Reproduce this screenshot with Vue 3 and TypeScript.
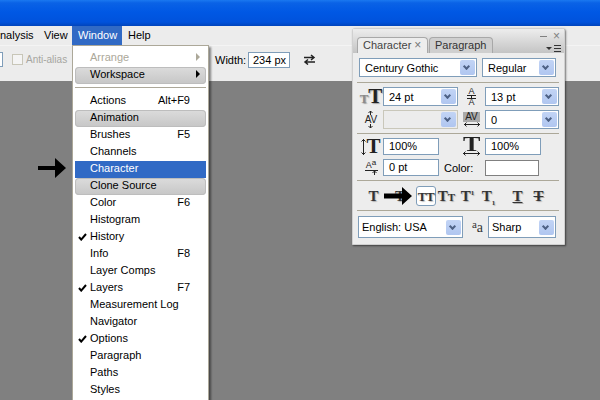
<script setup lang="ts">
interface Item { label: string; key?: string; check?: boolean; kind?: string; arrow?: boolean }
const items: Item[] = [
  { label: 'Arrange', kind: 'disabled', arrow: true },
  { label: 'Workspace', kind: 'pill', arrow: true },
  { label: '', kind: 'sep' },
  { label: 'Actions', key: 'Alt+F9' },
  { label: 'Animation', kind: 'pill' },
  { label: 'Brushes', key: 'F5' },
  { label: 'Channels' },
  { label: 'Character', kind: 'active' },
  { label: 'Clone Source', kind: 'pill' },
  { label: 'Color', key: 'F6' },
  { label: 'Histogram' },
  { label: 'History', check: true },
  { label: 'Info', key: 'F8' },
  { label: 'Layer Comps' },
  { label: 'Layers', key: 'F7', check: true },
  { label: 'Measurement Log' },
  { label: 'Navigator' },
  { label: 'Options', check: true },
  { label: 'Paragraph' },
  { label: 'Paths' },
  { label: 'Styles' },
]
</script>

<template>
  <div class="app">
    <div class="titlebar"></div>
    <div class="menubar">
      <span class="mb m-analysis">nalysis</span>
      <span class="mb m-view">View</span>
      <span class="mb m-window">Window</span>
      <span class="mb m-help">Help</span>
    </div>
    <div class="options">
      <span class="stub"></span>
      <span class="check"></span>
      <span class="aa">Anti-alias</span>
      <span class="width-label">Width:</span>
      <span class="width-input">234 px</span>
      <svg class="swap" width="13" height="11" viewBox="0 0 13 11">
        <path d="M1 3.500H10M8 1l3 2.500L8 6" fill="none" stroke="#222" stroke-width="1.500" />
        <path d="M12 8H3M5 5.500L2 8l3 2.500" fill="none" stroke="#222" stroke-width="1.500" />
      </svg>
    </div>
    <div class="canvas"></div>

    <div class="menu">
      <template v-for="it in items" :key="it.label || 'sep'">
        <div v-if="it.kind === 'sep'" class="msep"></div>
        <div v-else class="mi" :class="it.kind">
          <svg v-if="it.check" class="tick" width="9" height="8" viewBox="0 0 9 8">
            <path d="M1 4l2.200 2.600L8 1" fill="none" stroke="#000" stroke-width="2" />
          </svg>
          <span class="ml">{{ it.label }}</span>
          <span v-if="it.key" class="mk">{{ it.key }}</span>
          <span v-if="it.arrow" class="tri"></span>
        </div>
      </template>
    </div>

    <div class="marrow">
      <svg width="28" height="20" viewBox="0 0 28 20"><path d="M0 8H17V0L28 10 17 20V12H0Z" fill="#000" /></svg>
    </div>

    <div class="panel">
      <div class="head">
        <div class="tab on">Character <span class="x">×</span></div>
        <div class="tab off">Paragraph</div>
        <div class="winbtns"><span class="minus"></span><span class="close">×</span></div>
        <div class="flyout"><span class="fly-tri"></span><span class="fly-lines"></span></div>
      </div>
      <div class="body">
        <div class="r r-font">
          <div class="sel w118"><span>Century Gothic</span><i class="drop"></i></div>
          <div class="sel w74"><span>Regular</span><i class="drop"></i></div>
        </div>
        <div class="hr h1"></div>
        <div class="grid g1">
          <span class="ic big"><b class="gt">T</b><b>T</b></span>
          <div class="sel w75"><span>24 pt</span><i class="drop"></i></div>
          <span class="ic stack lead">
            <span>A</span>
            <svg width="11" height="4" viewBox="0 0 11 4"><path d="M1 .500H10M5.500 .500V4M1 3.500H10" stroke="#222" fill="none" /></svg>
            <span>A</span>
          </span>
          <div class="sel w74"><span>13 pt</span><i class="drop"></i></div>
          <span class="ic stack av">
            <svg width="5" height="4" viewBox="0 0 5 4"><path d="M2.500 0V4M0.500 2l2-2 2 2" stroke="#222" fill="none" /></svg>
            <span>AV</span>
            <svg width="5" height="4" viewBox="0 0 5 4"><path d="M2.500 0V4M0.500 2l2 2 2-2" stroke="#222" fill="none" /></svg>
          </span>
          <div class="sel w75 dis"><span></span><i class="drop"></i></div>
          <span class="ic stack avb">
            <span class="avbox">AV</span>
            <svg width="16" height="5" viewBox="0 0 16 5"><path d="M0 2.500H16M2.500 .500L.500 2.500l2 2M13.500 .500l2 2-2 2" stroke="#222" fill="none" /></svg>
          </span>
          <div class="sel w74"><span>0</span><i class="drop"></i></div>
        </div>
        <div class="hr h2"></div>
        <div class="grid g2">
          <span class="ic rowic vt">
            <svg width="5" height="16" viewBox="0 0 5 16"><path d="M2.500 0V16M.500 2.500l2-2 2 2M.500 13.500l2 2 2-2" stroke="#222" fill="none" /></svg>
            <b>T</b>
          </span>
          <div class="inp w56">100%</div>
          <span class="ic stack ht">
            <b>T</b>
            <svg width="17" height="5" viewBox="0 0 17 5"><path d="M0 2.500H17M2.500 .500L.500 2.500l2 2M14.500 .500l2 2-2 2" stroke="#222" fill="none" /></svg>
          </span>
          <div class="inp w56">100%</div>
          <span class="ic base">
            <span class="base-top"><span class="ba">A</span><sup>a</sup></span>
            <svg width="13" height="5" viewBox="0 0 13 5"><path d="M0 .500H13M9.500 5V1M7.500 3l2-2 2 2" stroke="#222" fill="none" /></svg>
          </span>
          <div class="inp w56">0 pt</div>
          <span class="colorlabel">Color:</span>
          <div class="color"></div>
        </div>
        <div class="hr h3"></div>
        <div class="styles">
          <span class="st s0">T</span>
          <span class="st s1"><s>T</s></span>
          <span class="st s2">TT</span>
          <span class="st s3">T<small>T</small></span>
          <span class="st s4">T<sup>1</sup></span>
          <span class="st s5">T<sub>1</sub></span>
          <span class="st s6"><u>T</u></span>
          <span class="st s7"><s>T</s></span>
        </div>
        <div class="hr h4"></div>
        <div class="r r-lang">
          <div class="sel lang"><span>English: USA</span><i class="drop"></i></div>
          <span class="aa-ic"><small>a</small>a</span>
          <div class="sel sharp"><span>Sharp</span><i class="drop"></i></div>
        </div>
      </div>
      <svg class="parrow" width="28" height="18" viewBox="0 0 28 18"><path d="M0 6.500H18V0L28 9 18 18V11.500H0Z" fill="#000" /></svg>
    </div>
  </div>
</template>

<style>
body { margin: 0; }
</style>

<style scoped>
.app {
  position: relative;
  width: 600px;
  height: 400px;
  overflow: hidden;
  display: flex;
  flex-direction: column;
  background: #808080;
  font-family: "Liberation Sans", sans-serif;
  font-size: 11px;
  color: #000;
}
.titlebar {
  height: 26px;
  background: linear-gradient(#1a78f0 0, #0a62e6 3px, #0058e4 12px, #0052dc 22px, #0044bc 26px);
}
.menubar {
  height: 19px;
  background: #ececec;
  display: flex;
  align-items: center;
  position: relative;
}
.mb { line-height: 19px; }
.m-analysis { width: 44px; }
.m-view { width: 28px; }
.m-window {
  width: 50px;
  box-sizing: border-box;
  padding-left: 6px;
  background: #316ac5;
  color: #fff;
}
.m-help { margin-left: 6px; }
.options {
  height: 36px;
  box-sizing: border-box;
  background: #ececec;
  border-top: 1px solid #f4f4f4;
  display: flex;
  align-items: center;
  padding-bottom: 8px;
}
.stub {
  width: 3px;
  height: 15px;
  box-sizing: border-box;
  background: #fff;
  border: 1px solid #7f9db9;
  border-left: 0;
}
.check {
  width: 11px;
  height: 11px;
  margin-left: 9px;
  box-sizing: border-box;
  background: #f4f4f4;
  border: 1px solid #c8c6b8;
}
.aa { margin-left: 3px; color: #a6a6a0; width: 40px; white-space: nowrap; font-size: 10px; }
.width-label { margin-left: 149px; width: 33px; }
.width-input {
  width: 42px;
  height: 16px;
  box-sizing: border-box;
  background: #fff;
  border: 1px solid #7f9db9;
  line-height: 14px;
  padding-left: 4px;
}
.swap { margin-left: 13px; }
.canvas { flex: 1; background: #808080; }

.menu {
  position: absolute;
  left: 72px;
  top: 45px;
  width: 137px;
  height: 380px;
  box-sizing: border-box;
  background: #fff;
  border: 1px solid #aca899;
  box-shadow: 2px 2px 2px rgba(0, 0, 0, 0.45);
  padding: 4px 2px 0;
}
.mi {
  position: relative;
  height: 17px;
  line-height: 15px;
  box-sizing: border-box;
}
.ml { position: absolute; left: 15px; top: 0; white-space: nowrap; }
.mk { position: absolute; right: 16px; top: 0; white-space: nowrap; }
.disabled { color: #aca899; }
.pill {
  background: linear-gradient(#dcdcdc, #c6c6c6);
  border-radius: 4px;
  box-shadow: inset 0 0 0 1px #bdbdbd;
}
.active { background: #316ac5; color: #fff; }
.msep { height: 1px; background: #aca899; margin: 3px 0 5px; }
.tick { position: absolute; left: 3px; top: 4px; }
.tri {
  position: absolute;
  right: 6px;
  top: 3px;
  border-left: 4px solid #000;
  border-top: 4px solid transparent;
  border-bottom: 4px solid transparent;
}
.disabled .tri { border-left-color: #aca899; }

.marrow { position: absolute; left: 38px; top: 158px; line-height: 0; }

.panel {
  position: absolute;
  left: 352px;
  top: 28px;
  width: 213px;
  height: 217px;
  box-sizing: border-box;
  background: #ededed;
  border: 1px solid #d0d0d0;
  border-radius: 3px 3px 0 0;
  box-shadow: 1px 1px 2px rgba(0, 0, 0, 0.5);
}
.head {
  height: 24px;
  box-sizing: border-box;
  position: relative;
  background: linear-gradient(#ededed, #c4c4c4);
  display: flex;
  align-items: flex-end;
  padding-left: 4px;
}
.tab {
  height: 15px;
  line-height: 15px;
  font-size: 11px;
  box-sizing: content-box;
  padding-left: 5px;
  color: #333;
  border: 1px solid #a8a8a8;
  border-bottom: 0;
  border-radius: 4px 4px 0 0;
  background: #cfcfcf;
  white-space: nowrap;
}
.tab.on { background: #ededed; width: 64px; margin-right: 1px; color: #444; }
.tab.off { width: 57px; }
.x { color: #777; font-size: 12px; }
.winbtns { position: absolute; right: 4px; top: 2px; display: flex; align-items: center; gap: 6px; color: #808080; }
.minus { width: 7px; height: 1px; background: #808080; }
.close { font-size: 12px; line-height: 11px; }
.flyout { position: absolute; right: 3px; top: 16px; display: flex; align-items: center; gap: 2px; }
.fly-tri { border-top: 3px solid #333; border-left: 3px solid transparent; border-right: 3px solid transparent; }
.fly-lines { width: 7px; height: 7px; box-sizing: border-box; border-top: 1px solid #333; border-bottom: 1px solid #333; background: linear-gradient(transparent 2px, #333 2px, #333 3px, transparent 3px); }

.body { padding: 5px 6px 0; position: relative; }
.r { display: flex; justify-content: space-between; }
.r-font { padding-right: 2px; }
.sel {
  height: 19px;
  box-sizing: border-box;
  border: 1px solid #7f9db9;
  background: #fff;
  display: flex;
  align-items: center;
  justify-content: space-between;
  padding-left: 5px;
  padding-right: 1px;
  white-space: nowrap;
}
.drop {
  position: relative;
  width: 15px;
  height: 15px;
  border-radius: 2px;
  background: linear-gradient(#c2d4f5, #b0c6f0);
  flex: none;
}
.drop::after {
  content: "";
  position: absolute;
  left: 4px;
  top: 4px;
  width: 5px;
  height: 5px;
  border-right: 2px solid #4d6185;
  border-bottom: 2px solid #4d6185;
  box-sizing: border-box;
  transform: rotate(45deg);
}
.dis { border-color: #c9c7ba; background: #ececec; }
.w118 { width: 118px; }
.w74 { width: 74px; }
.w75 { width: 75px; }
.w56 { width: 56px; }
.hr { height: 1px; background: #aca899; margin-left: -2px; margin-right: -1px; }
.h1 { margin-top: 5px; }
.h2 { margin-top: 4px; }
.h3 { margin-top: 4px; }
.h4 { margin-top: 3px; }
.grid { display: grid; align-items: center; justify-items: center; }
.grid > .sel, .grid > .inp, .grid > .color { justify-self: start; }
.g1 {
  grid-template-columns: 24px 75px 27px 74px;
  row-gap: 4px;
  grid-auto-rows: 19px;
  margin-top: 4px;
}
.g2 {
  grid-template-columns: 24px 75px 27px 74px;
  row-gap: 4px;
  grid-auto-rows: 17px;
  margin-top: 4px;
}
.inp {
  height: 17px;
  box-sizing: border-box;
  border: 1px solid #7f9db9;
  background: #fff;
  line-height: 15px;
  padding-left: 5px;
}
.colorlabel { grid-column: 3; justify-self: start; margin-left: -14px; white-space: nowrap; }
.color { width: 54px; height: 16px; box-sizing: border-box; border: 1px solid #808080; background: #fff; }
.ic {
  font-family: "Liberation Serif", serif;
  font-weight: 700;
  color: #222;
  line-height: 1;
  white-space: nowrap;
}
.ic svg { display: block; flex: none; }
.stack { display: flex; flex-direction: column; align-items: center; }
.rowic { display: flex; align-items: center; }
.big { font-size: 21px; text-shadow: 1px 1px 1px rgba(0,0,0,.3); }
.big .gt { font-size: 13px; color: #8a8a8a; }
.lead { font-family: "Liberation Sans", sans-serif; font-size: 9px; line-height: 7px; font-weight: 400; }
.av { font-family: "Liberation Sans", sans-serif; font-size: 10px; line-height: 9px; font-weight: 400; }
.avb { font-family: "Liberation Sans", sans-serif; font-size: 10px; font-weight: 400; }
.avbox { background: #aaa; width: 17px; text-align: center; line-height: 10px; }
.vt { font-size: 21px; }
.ht { font-size: 20px; line-height: 13px; }
.ht b { transform: scaleX(1.300); display: block; }
.base { font-family: "Liberation Sans", sans-serif; font-size: 9px; font-weight: 400; display: flex; flex-direction: column; align-items: center; }
.base-top { line-height: 10px; }
.base sup { font-size: 8px; line-height: 0; vertical-align: 3px; }
.styles {
  display: flex;
  align-items: center;
  height: 22px;
  margin-top: 4px;
  position: relative;
}
.st {
  font-family: "Liberation Serif", serif;
  font-weight: 700;
  font-size: 15px;
  color: #333;
  width: 21px;
  text-align: center;
  line-height: 20px;
  white-space: nowrap;
  text-shadow: 1px 1px 1px rgba(0,0,0,.25);
}
.st small { font-size: 11px; }
.st sup, .st sub { font-size: 7px; line-height: 0; }
.s0 { margin-left: 4px; }
.s1 { width: 32px; }
.s2 {
  width: 20px;
  height: 20px;
  box-sizing: border-box;
  border: 1px solid #7f9db9;
  border-radius: 3px;
  background: #fff;
  line-height: 19px;
  font-size: 13px;
  letter-spacing: -0.500px;
}
.s6 { margin-left: 8px; }
.r-lang { margin-top: 5px; margin-left: -1px; align-items: center; }
.lang { width: 105px; height: 22px; padding-left: 3px; }
.sharp { width: 68px; height: 22px; padding-left: 3px; margin-right: 2px; }
.aa-ic { font-family: "Liberation Serif", serif; font-size: 14px; color: #333; margin-left: 7px; margin-right: 3px; }
.aa-ic small { font-size: 11px; vertical-align: 4px; }
.parrow { position: absolute; left: 31px; top: 158px; }
</style>
